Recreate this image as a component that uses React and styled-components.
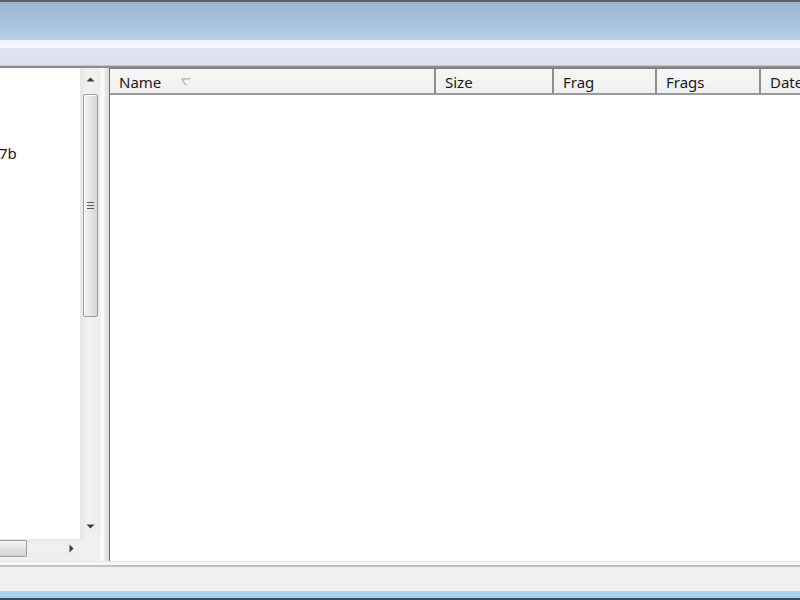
import React from "react";
import styled, { createGlobalStyle } from "styled-components";

const Global = createGlobalStyle`
  html, body { margin: 0; padding: 0; background: #ffffff; }
  body { font-family: "Noto Sans", "Open Sans", sans-serif; color: #1a1a1a; }
`;

const Window = styled.div`
  width: 800px;
  height: 600px;
  display: flex;
  flex-direction: column;
  overflow: hidden;
  background: #f0f0f0;
`;

const TopEdge = styled.div`
  height: 2px;
  background: #5c5f63;
`;

const Caption = styled.div`
  height: 38px;
  background: linear-gradient(to bottom, #9ab7d2 0%, #a7c3dd 55%, #b8d2ea 100%);
`;

const Highlight = styled.div`
  height: 8px;
  background: linear-gradient(to bottom, #eef4f9, #f6f9fb);
`;

const Toolbar = styled.div`
  height: 17px;
  background: linear-gradient(to bottom, #e1e5f2, #dcdfee);
  border-bottom: 1px solid #c4c6cc;
`;

const ToolbarShadow = styled.div`
  height: 2px;
  background: #8c8e92;
`;

const Main = styled.div`
  display: flex;
  height: 493px;
`;

const LeftPane = styled.div`
  width: 100px;
  flex-shrink: 0;
  display: flex;
  flex-direction: column;
  background: #f0f0f0;
`;

const TreeRow = styled.div`
  display: flex;
  height: 471px;
`;

const TreeView = styled.div`
  width: 80px;
  background: #ffffff;
  overflow: hidden;
`;

const TreeItem = styled.div`
  font-size: 15px;
  line-height: 18px;
  white-space: nowrap;
  margin-left: -1px;
  margin-top: ${(p) => p.$top}px;
`;

const VScroll = styled.div`
  width: 20px;
  display: flex;
  flex-direction: column;
  align-items: center;
  background: linear-gradient(to right, #e6e6e6, #f2f2f2 40%, #ececec);
`;

const ArrowBtn = styled.div`
  width: 18px;
  height: ${(p) => p.$h || 22}px;
  display: flex;
  align-items: center;
  justify-content: center;
  flex-shrink: 0;
`;

const VThumb = styled.div`
  width: 15px;
  height: 223px;
  margin-top: 4px;
  border: 1px solid #9c9c9c;
  border-radius: 2px;
  box-sizing: border-box;
  background: linear-gradient(to right, #f3f3f3, #e6e6e6 50%, #d6d6d6);
  box-shadow: inset 1px 1px 0 #ffffff;
  display: flex;
  align-items: center;
  justify-content: center;
`;

const Grip = styled.div`
  width: 7px;
  display: flex;
  flex-direction: column;
  gap: 2px;
  span {
    height: 1px;
    background: #5a5a5a;
  }
`;

const Spacer = styled.div`
  flex: 1;
`;

const HScrollRow = styled.div`
  display: flex;
  height: 18px;
`;

const HScroll = styled.div`
  width: 80px;
  display: flex;
  align-items: center;
  background: linear-gradient(to bottom, #e8e8e8, #f2f2f2 40%, #ececec);
`;

const HThumb = styled.div`
  width: 27px;
  height: 17px;
  box-sizing: border-box;
  border: 1px solid #9c9c9c;
  border-left: none;
  border-radius: 0 2px 2px 0;
  background: linear-gradient(to bottom, #f4f4f4, #e2e2e2 55%, #d2d2d2);
`;

const Corner = styled.div`
  width: 20px;
  background: #f0f0f0;
`;

const Splitter = styled.div`
  width: 10px;
  flex-shrink: 0;
  background: linear-gradient(to right, #f4f4f4, #ffffff 30%, #e8e8e8 60%, #dcdcdc);
  border-right: 1px solid #6e6e6e;
  box-sizing: border-box;
`;

const ListPane = styled.div`
  flex: 1;
  min-width: 0;
  overflow: hidden;
  display: flex;
  flex-direction: column;
  background: #ffffff;
  border-top: 1px solid #7b7b7b;
`;

const Header = styled.div`
  display: flex;
  height: 24px;
  flex-shrink: 0;
  background: linear-gradient(to bottom, #f7f7f7, #efefef);
  border-bottom: 2px solid #9a9a9a;
`;

const Col = styled.div`
  width: ${(p) => p.$w}px;
  flex-shrink: 0;
  box-sizing: border-box;
  padding: 2px 0 0 9px;
  display: flex;
  align-items: center;
  gap: 20px;
  font-size: 15px;
  border-right: 2px solid #8e8e8e;
  white-space: nowrap;
  overflow: hidden;
`;

const Status = styled.div`
  height: 28px;
  background: #f0f0f0;
  border-top: 1px solid #e2e2e2;
  box-shadow: inset 0 3px 0 #f8f8f8, inset 0 5px 0 #c2c2c2;
`;

const BottomEdge = styled.div`
  height: 8px;
  background: linear-gradient(to bottom, #eaf4fa 0, #eaf4fa 1px, #a9d5ee 1px, #9fcfea 100%);
`;

const BottomDark = styled.div`
  height: 2px;
  background: #3b4a55;
`;

const Up = () => (
  <svg width="9" height="5" viewBox="0 0 9 5">
    <path d="M0.5 4.5 L4.5 0.5 L8.5 4.5 Z" fill="#3c3c3c" />
  </svg>
);

const Down = () => (
  <svg width="9" height="5" viewBox="0 0 9 5">
    <path d="M0.5 0.5 L4.5 4.5 L8.5 0.5 Z" fill="#3c3c3c" />
  </svg>
);

const Right = () => (
  <svg width="5" height="9" viewBox="0 0 5 9">
    <path d="M0.5 0.5 L4.5 4.5 L0.5 8.5 Z" fill="#3c3c3c" />
  </svg>
);

const SortMark = () => (
  <svg width="10" height="8" viewBox="0 0 10 8">
    <path d="M0.5 1 L9 0.8 M0.8 1 L5 7.5" stroke="#9a9a9a" strokeWidth="1" fill="none" />
  </svg>
);

const columns = [
  { label: "Name", w: 326, sort: true },
  { label: "Size", w: 118 },
  { label: "Frag", w: 103 },
  { label: "Frags", w: 104 },
  { label: "Date", w: 120 },
];

export default function App() {
  return (
    <Window>
      <Global />
      <TopEdge />
      <Caption />
      <Highlight />
      <Toolbar />
      <ToolbarShadow />
      <Main>
        <LeftPane>
          <TreeRow>
            <TreeView>
              <TreeItem $top={76}>7b</TreeItem>
            </TreeView>
            <VScroll>
              <ArrowBtn>
                <Up />
              </ArrowBtn>
              <VThumb>
                <Grip>
                  <span />
                  <span />
                  <span />
                </Grip>
              </VThumb>
              <Spacer />
              <ArrowBtn $h={26}>
                <Down />
              </ArrowBtn>
            </VScroll>
          </TreeRow>
          <HScrollRow>
            <HScroll>
              <HThumb />
              <Spacer />
              <ArrowBtn $h={18}>
                <Right />
              </ArrowBtn>
            </HScroll>
            <Corner />
          </HScrollRow>
        </LeftPane>
        <Splitter />
        <ListPane>
          <Header>
            {columns.map((c) => (
              <Col key={c.label} $w={c.w}>
                {c.label}
                {c.sort && <SortMark />}
              </Col>
            ))}
          </Header>
        </ListPane>
      </Main>
      <Status />
      <BottomEdge />
      <BottomDark />
    </Window>
  );
}
